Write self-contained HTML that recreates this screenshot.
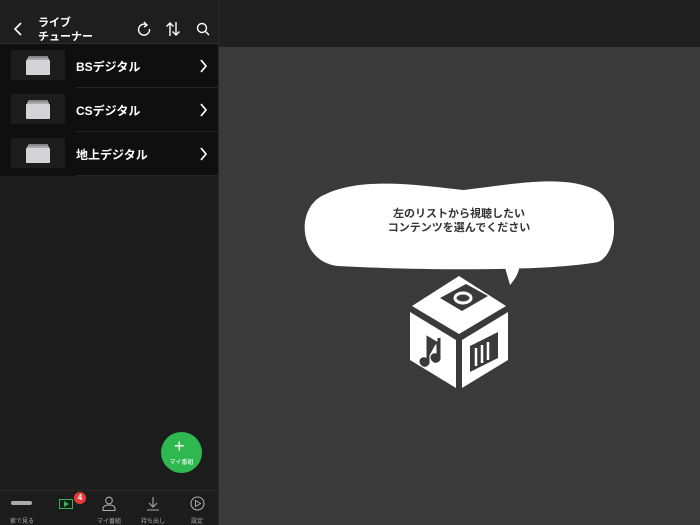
<!DOCTYPE html>
<html><head><meta charset="utf-8"><style>
*{margin:0;padding:0;box-sizing:border-box}
body{width:700px;height:525px;overflow:hidden;background:#3a3a3b;font-family:"Liberation Sans","Noto Sans CJK JP",sans-serif;position:relative;color:#fff}
.left{position:absolute;left:0;top:0;width:218px;height:525px;background:#1c1c1c}
.rh{position:absolute;left:219px;top:0;width:481px;height:47px;background:#202020}
.div{position:absolute;left:218px;top:0;width:1px;height:525px;background:#2a2a2a}
.hdr{position:absolute;left:0;top:0;width:218px;height:44px;background:#1e1e1e;border-bottom:1px solid #2c2c2c}
.title{position:absolute;left:38px;top:16px;font-size:11px;font-weight:bold;line-height:14px}
.row{position:absolute;left:0;width:218px;height:44px;background:#0f0f0f}
.row .th{position:absolute;left:11px;top:6px;width:54px;height:30px;background:#1c1c1c}
.row .lb{position:absolute;left:76px;top:14px;font-size:12px;font-weight:bold}
.row .ln{position:absolute;left:76px;bottom:0;right:0;height:1px;background:#262626}
.tab{position:absolute;left:0;top:490px;width:218px;height:35px;border-top:1px solid #2a2a2a;background:#1c1c1c}
.tl{position:absolute;top:516px;font-size:6px;color:#aaa;transform:translateX(-50%)}
.bubble{position:absolute;left:304px;top:176px;width:310px;height:110px}
.btxt{position:absolute;left:304px;top:207px;width:310px;text-align:center;font-size:11px;font-weight:bold;color:#333;line-height:14px}
</style></head><body>
<div class="left"></div>
<div class="rh"></div>
<div class="hdr">
<svg style="position:absolute;left:12px;top:22px" width="12" height="14" viewBox="0 0 12 14"><path d="M9 1L3 7l6 6" stroke="#fff" stroke-width="1.6" fill="none"/></svg>
<div class="title">ライブ<br>チューナー</div>
<svg style="position:absolute;left:136px;top:21px" width="16" height="16" viewBox="0 0 16 16"><path d="M11 4A5.5 5.5 0 1 0 13.5 8" stroke="#fff" stroke-width="1.4" fill="none"/><path d="M8 1l3 3-3 2" stroke="#fff" stroke-width="1.4" fill="none"/></svg>
<svg style="position:absolute;left:165px;top:21px" width="16" height="16" viewBox="0 0 16 16"><path d="M5 15V2M1.5 5.5L5 2l3.5 3.5M11 1v13M7.5 10.5L11 14l3.5-3.5" stroke="#fff" stroke-width="1.4" fill="none"/></svg>
<svg style="position:absolute;left:196px;top:22px" width="14" height="14" viewBox="0 0 14 14"><circle cx="6" cy="6" r="4.5" stroke="#fff" stroke-width="1.4" fill="none"/><path d="M9.3 9.3L13 13" stroke="#fff" stroke-width="1.4"/></svg>
</div>
<div class="row" style="top:44px"><div class="th"><svg style="position:absolute;left:15px;top:6px" width="24" height="19"><rect x="2" y="0" width="20" height="3" fill="#888" rx="1"/><rect x="1" y="2" width="22" height="3" fill="#aaa" rx="1"/><rect x="0" y="4" width="24" height="15" fill="#d4d4d6" rx="1"/></svg></div><div class="lb">BSデジタル</div><svg style="position:absolute;left:199px;top:15px" width="10" height="14"><path d="M2 1l5 6-5 6" stroke="#fff" stroke-width="1.7" fill="none"/></svg><div class="ln"></div></div>
<div class="row" style="top:88px"><div class="th"><svg style="position:absolute;left:15px;top:6px" width="24" height="19"><rect x="2" y="0" width="20" height="3" fill="#888" rx="1"/><rect x="1" y="2" width="22" height="3" fill="#aaa" rx="1"/><rect x="0" y="4" width="24" height="15" fill="#d4d4d6" rx="1"/></svg></div><div class="lb">CSデジタル</div><svg style="position:absolute;left:199px;top:15px" width="10" height="14"><path d="M2 1l5 6-5 6" stroke="#fff" stroke-width="1.7" fill="none"/></svg><div class="ln"></div></div>
<div class="row" style="top:132px"><div class="th"><svg style="position:absolute;left:15px;top:6px" width="24" height="19"><rect x="2" y="0" width="20" height="3" fill="#888" rx="1"/><rect x="1" y="2" width="22" height="3" fill="#aaa" rx="1"/><rect x="0" y="4" width="24" height="15" fill="#d4d4d6" rx="1"/></svg></div><div class="lb">地上デジタル</div><svg style="position:absolute;left:199px;top:15px" width="10" height="14"><path d="M2 1l5 6-5 6" stroke="#fff" stroke-width="1.7" fill="none"/></svg><div class="ln"></div></div>
<div style="position:absolute;left:161px;top:432px;width:41px;height:41px;border-radius:50%;background:#2fb84f"></div>
<div style="position:absolute;left:174px;top:436px;font-size:18px;color:#fff;line-height:20px">+</div>
<div style="position:absolute;left:161px;top:457px;width:41px;text-align:center;font-size:6px">マイ番組</div>
<div class="tab"></div>
<div style="position:absolute;left:11px;top:501px;width:21px;height:4px;background:#aaa;border-radius:2px"></div>
<div style="position:absolute;left:59px;top:499px;width:14px;height:10px;border:1.3px solid #2fb84f"></div>
<svg style="position:absolute;left:64px;top:501px" width="5" height="6"><path d="M0 0l5 3-5 3z" fill="#2fb84f"/></svg>
<div style="position:absolute;left:74px;top:492px;width:12px;height:12px;border-radius:50%;background:#e83a3a;font-size:8px;font-weight:bold;text-align:center;line-height:12px">4</div>
<svg style="position:absolute;left:102px;top:496px" width="14" height="15"><circle cx="7" cy="4.5" r="3.3" stroke="#aaa" fill="none" stroke-width="1.1"/><path d="M1 14.5v-1.5c0-2.5 2-4 6-4s6 1.5 6 4v1.5z" stroke="#aaa" fill="none" stroke-width="1.1"/></svg>
<svg style="position:absolute;left:146px;top:496px" width="14" height="15"><path d="M7 1v10M3 7l4 4 4-4M1 14h12" stroke="#aaa" fill="none" stroke-width="1.1"/></svg>
<svg style="position:absolute;left:190px;top:496px" width="15" height="15"><circle cx="7.5" cy="7.5" r="6.5" stroke="#aaa" fill="none" stroke-width="1.1"/><path d="M5.5 4.5l5 3-5 3z" stroke="#aaa" fill="none" stroke-width="1"/></svg>
<div class="tl" style="left:22px">家で見る</div>
<div class="tl" style="left:109px">マイ番組</div>
<div class="tl" style="left:153px">持ち出し</div>
<div class="tl" style="left:197px">設定</div>
<div class="div"></div>
<svg class="bubble" viewBox="0 0 310 110">
<path d="M22 18C60 0 120 10 160 14C210 8 260 -2 292 14C318 28 314 78 294 86C240 96 110 94 34 90C-6 86 -10 30 22 18Z" fill="#fff"/>
<path d="M200 88L206 109C214 100 216 92 216 86Z" fill="#fff"/>
</svg>
<div class="btxt">左のリストから視聴したい<br>コンテンツを選んでください</div>
<svg style="position:absolute;left:410px;top:276px" width="98" height="112" viewBox="0 0 98 112">
<path d="M49 0L96 30 49 58 2 30Z" fill="#fff"/>
<path d="M0 36L46 64V112L0 84Z" fill="#fff"/>
<path d="M98 36L52 64V112L98 84Z" fill="#fff"/>
<path d="M30 22L56 8 78 20 52 35Z" fill="#3a3a3b"/>
<ellipse cx="53" cy="22" rx="8" ry="5" fill="none" stroke="#fff" stroke-width="3"/>
<path d="M17 84c-4-3-8 0-5 4 3 3 7 0 6-3V62l10 6v12c-4-3-8 0-5 4 3 3 7 0 6-3V62" stroke="#3a3a3b" stroke-width="3" fill="#3a3a3b"/>
<path d="M60 70L88 56V82L60 96Z" fill="#3a3a3b"/>
<path d="M66 72v18M72 69v18M78 66v18" stroke="#fff" stroke-width="2.5"/>
</svg>
</body></html>
